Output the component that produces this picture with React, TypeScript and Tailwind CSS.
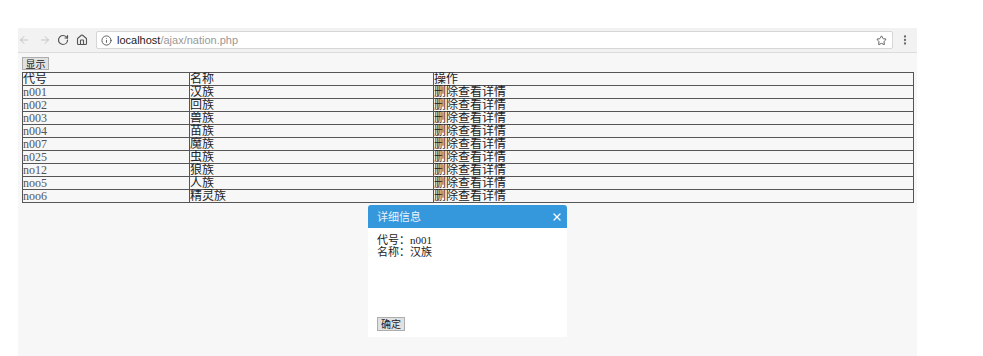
import { ArrowLeft, ArrowRight, RotateCw, House, Info, Star, EllipsisVertical, X } from "lucide-react";

const rows = [
    ["n001", "汉族"],
    ["n002", "回族"],
    ["n003", "兽族"],
    ["n004", "苗族"],
    ["n007", "魔族"],
    ["n025", "虫族"],
    ["no12", "狼族"],
    ["noo5", "人族"],
    ["noo6", "精灵族"],
];

const cellFont = { fontFamily: '"Liberation Serif", "Noto Sans CJK SC", serif' };

export default function App() {
    return (
        <div className="relative w-[983px] h-[356px] overflow-hidden bg-white">
            <div className="ml-[18px] mt-[28px] w-[899px]">
                {/* browser toolbar */}
                <div className="h-[25px] bg-[#f2f2f2] border-b border-[#dcdcdc] flex items-center pr-[6px]">
                    <ArrowLeft size={12} strokeWidth={2} className="text-[#c4c4c4]" />
                    <ArrowRight size={12} strokeWidth={2} className="text-[#c4c4c4] ml-[9px]" />
                    <RotateCw size={12} strokeWidth={2.4} className="text-[#555] ml-[6px]" />
                    <House size={12} strokeWidth={2.2} className="text-[#555] ml-[7px]" />
                    <div className="ml-[8px] flex-1 h-[18px] bg-white border border-[#d6d6d6] rounded-[2px] flex items-center pl-[4px] pr-[5px]">
                        <Info size={11} strokeWidth={2} className="text-[#555]" />
                        <span
                            className="ml-[5px] text-[11px] leading-none text-[#999]"
                            style={{ fontFamily: '"Liberation Sans", Arial, sans-serif' }}
                        >
                            <span className="text-[#222]">localhost</span>/ajax/nation.php
                        </span>
                        <Star size={11} strokeWidth={2} className="ml-auto text-[#555]" />
                    </div>
                    <EllipsisVertical size={12} strokeWidth={2.6} className="ml-[6px] text-[#666]" />
                </div>

                {/* page content */}
                <div className="h-[303px] bg-[#f7f7f7] pl-[3px] pt-[4px]">
                    <button
                        className="ml-[1px] h-[13px] w-[27px] bg-[#e1e1e1] border border-[#adadad] text-[10px] leading-[11px] text-[#222] flex items-center justify-center"
                        style={{ fontFamily: '"Noto Sans CJK SC", sans-serif' }}
                    >
                        显示
                    </button>
                    <table
                        className="ml-[1px] mt-[2px] w-[892px] border-collapse border border-[#333] text-[12px] text-[#222]"
                        style={cellFont}
                    >
                        <tbody>
                            <tr className="h-[13px]">
                                <td className="w-[167px] border border-[#555] p-0 leading-[12px]">代号</td>
                                <td className="w-[244px] border border-[#555] p-0 leading-[12px]">名称</td>
                                <td className="border border-[#555] p-0 leading-[12px]">操作</td>
                            </tr>
                            {rows.map(([code, name]) => (
                                <tr key={code} className="h-[13px]">
                                    <td className="border border-[#555] p-0 leading-[12px] text-[#555]">{code}</td>
                                    <td className="border border-[#555] p-0 leading-[12px]">{name}</td>
                                    <td className="border border-[#555] p-0 leading-[12px]">删除查看详情</td>
                                </tr>
                            ))}
                        </tbody>
                    </table>
                </div>
            </div>

            {/* detail dialog */}
            <div className="absolute left-[368px] top-[205px] w-[199px] h-[132px] bg-white rounded-t-[3px] flex flex-col">
                <div className="h-[23px] bg-[#3598dc] rounded-t-[3px] flex items-center pl-[9px] pr-[4px]">
                    <span className="text-[11px] text-[#e8f2fb]" style={{ fontFamily: '"Noto Sans CJK SC", sans-serif' }}>
                        详细信息
                    </span>
                    <X size={12} strokeWidth={2.4} className="ml-auto text-white" />
                </div>
                <div className="pl-[9px] pt-[6px] text-[11px] leading-[12px] text-[#222]" style={cellFont}>
                    <div>代号：n001</div>
                    <div>名称：汉族</div>
                </div>
                <button
                    className="mt-auto mb-[6px] ml-[9px] h-[14px] w-[28px] bg-[#e1e1e1] border border-[#adadad] text-[10px] leading-[12px] text-[#222] flex items-center justify-center"
                    style={{ fontFamily: '"Noto Sans CJK SC", sans-serif' }}
                >
                    确定
                </button>
            </div>
        </div>
    );
}
